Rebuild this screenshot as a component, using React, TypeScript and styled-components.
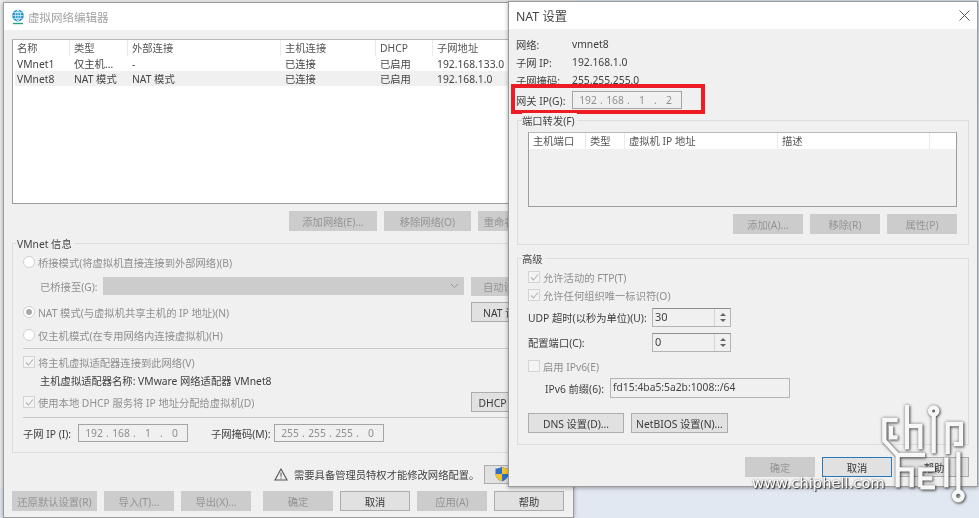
import React from "react";
import styled, { createGlobalStyle } from "styled-components";

const GlobalStyle = createGlobalStyle`
  html, body {
    margin: 0;
    padding: 0;
    overflow: hidden;
    background: #dfe6f0;
  }
  * {
    box-sizing: border-box;
  }
`;

const Desktop = styled.div`
  position: relative;
  width: 979px;
  height: 518px;
  overflow: hidden;
  background: linear-gradient(180deg, #d6dfeb 0%, #e2e8f1 100%);
  font-family: "Noto Sans", "Noto Sans CJK SC", sans-serif;
  font-size: 10.3px;
  color: #333;
  filter: blur(0.35px);
`;

const BehindStrip = styled.div`
  position: absolute;
  left: 0;
  top: 0;
  width: 574px;
  height: 487px;
  background: #ececec;
`;

const Win = styled.div<{ $left: number; $top: number; $w: number; $h: number }>`
  position: absolute;
  left: ${(p) => p.$left}px;
  top: ${(p) => p.$top}px;
  width: ${(p) => p.$w}px;
  height: ${(p) => p.$h}px;
  background: #f0f0f0;
  border: 1px solid #9c9c9c;
  box-shadow: 0 1px 4px rgba(0, 0, 0, 0.35);
`;

const TitleBar = styled.div`
  display: flex;
  align-items: center;
  gap: 3px;
  height: 27px;
  padding: 0 6px 0 7px;
  background: #fff;
`;

const TitleText = styled.span<{ $dim?: boolean }>`
  font-size: ${(p) => (p.$dim ? 11.5 : 12.3)}px;
  color: ${(p) => (p.$dim ? "#a2a2a2" : "#444")};
`;

const CloseBox = styled.span`
  display: flex;
  margin-left: auto;
  margin-right: 1px;
`;

const LeftBody = styled.div`
  display: flex;
  flex-direction: column;
  padding: 9px 8px 0;
`;

const RightBody = styled.div`
  position: relative;
  display: flex;
  flex-direction: column;
  padding: 5px 8px 0 7px;
`;

const ListBox = styled.div<{ $h: number; $white?: boolean }>`
  height: ${(p) => p.$h}px;
  background: ${(p) => (p.$white ? "#fff" : "#f0f0f0")};
  border: 1px solid #9d9d9d;
  border-top-color: #b8b8b8;
`;

const ListRow = styled.div<{ $cols: string; $white?: boolean; $selected?: boolean }>`
  display: grid;
  grid-template-columns: ${(p) => p.$cols};
  align-items: center;
  height: 15px;
  background: ${(p) => (p.$selected ? "#f0f0f0" : p.$white ? "#fff" : "transparent")};
  margin-left: 2px;
`;

const HeadRow = styled(ListRow)`
  height: 16px;
  margin-left: 0;
  background: #fff;
`;

const HeadCell = styled.span`
  height: 100%;
  padding-left: 4px;
  line-height: 16px;
  white-space: nowrap;
  overflow: hidden;
  color: #555;
  border-right: 1px solid #eaeaea;
`;

const Cell = styled.span`
  padding-left: 2px;
  white-space: nowrap;
  overflow: hidden;
  color: #444;
`;

const ButtonRow = styled.div<{ $mt: number; $end?: boolean }>`
  display: flex;
  justify-content: ${(p) => (p.$end ? "flex-end" : "flex-start")};
  gap: 7px;
  margin-top: ${(p) => p.$mt}px;
`;

const Btn = styled.div<{ $w: number; $off?: boolean; $focus?: boolean; $ml?: number; $h?: number }>`
  display: flex;
  flex: none;
  align-items: center;
  justify-content: center;
  gap: 3px;
  width: ${(p) => p.$w}px;
  height: ${(p) => p.$h ?? 20}px;
  margin-left: ${(p) => p.$ml ?? 0}px;
  white-space: nowrap;
  overflow: hidden;
  background: ${(p) => (p.$off ? "#cccccc" : "#e1e1e1")};
  border: 1px solid ${(p) => (p.$focus ? "#2a78b5" : p.$off ? "#cccccc" : "#adadad")};
  color: ${(p) => (p.$off ? "#949494" : "#3a3a3a")};
`;

const Group = styled.div<{ $mt: number; $h: number; $pad: string; $ml?: number }>`
  position: relative;
  height: ${(p) => p.$h}px;
  margin-top: ${(p) => p.$mt}px;
  margin-left: ${(p) => p.$ml ?? 0}px;
  padding: ${(p) => p.$pad};
  border: 1px solid #dcdcdc;
`;

const Legend = styled.span`
  position: absolute;
  left: 4px;
  top: -8px;
  padding-right: 2px;
  line-height: 16px;
  background: #f0f0f0;
  color: #444;
`;

const FormRow = styled.div<{ $h?: number; $mt?: number; $indent?: number }>`
  display: flex;
  align-items: center;
  height: ${(p) => p.$h ?? 18}px;
  margin-top: ${(p) => p.$mt ?? 0}px;
  padding-left: ${(p) => p.$indent ?? 0}px;
  white-space: nowrap;
`;

const RadioMark = styled.span<{ $on?: boolean }>`
  display: flex;
  flex: none;
  align-items: center;
  justify-content: center;
  width: 12px;
  height: 12px;
  margin-right: 3px;
  background: #fff;
  border: 1px solid #d0d0d0;
  border-radius: 50%;

  &::after {
    content: "";
    display: ${(p) => (p.$on ? "block" : "none")};
    width: 6px;
    height: 6px;
    border-radius: 50%;
    background: #a8a8a8;
  }
`;

const CheckMark = styled.span`
  display: flex;
  flex: none;
  align-items: center;
  justify-content: center;
  width: 12px;
  height: 12px;
  margin-right: 3px;
  background: #f4f4f4;
  border: 1px solid #d4d4d4;
`;

const OffText = styled.span<{ $w?: number }>`
  flex: none;
  width: ${(p) => (p.$w ? `${p.$w}px` : "auto")};
  color: #8f8f8f;
`;

const DarkText = styled.span<{ $w?: number; $ml?: number }>`
  flex: none;
  width: ${(p) => (p.$w ? `${p.$w}px` : "auto")};
  margin-left: ${(p) => p.$ml ?? 0}px;
  color: #404040;
`;

const Combo = styled.div`
  display: flex;
  flex: none;
  align-items: center;
  justify-content: flex-end;
  width: 361px;
  height: 18px;
  padding-right: 5px;
  background: #cccccc;
`;

const Push = styled.span`
  flex: 1;
`;

const Rule = styled.div<{ $mt: number }>`
  height: 1px;
  margin-top: ${(p) => p.$mt}px;
  background: #c9c9c9;
`;

const IpBox = styled.div`
  display: flex;
  flex: none;
  align-items: center;
  width: 110px;
  height: 18px;
  padding-left: 5px;
  border: 1px solid #a4a4a4;
  color: #909090;
`;

const Octet = styled.span`
  width: 20px;
  text-align: center;
`;

const Dot = styled.span`
  width: 7px;
  text-align: center;
`;

const WarnRow = styled.div`
  display: flex;
  align-items: center;
  height: 20px;
  margin-top: 11px;
  padding-left: 262px;
  white-space: nowrap;
  color: #444;

  svg {
    flex: none;
  }
`;

const WarnText = styled.span`
  flex: none;
  width: 190px;
  margin-left: 6px;
`;

const InfoRow = styled.div<{ $h?: number; $mt?: number }>`
  display: grid;
  grid-template-columns: 56px auto;
  justify-content: start;
  align-items: center;
  height: ${(p) => p.$h ?? 18}px;
  margin-top: ${(p) => p.$mt ?? 0}px;
  white-space: nowrap;
  color: #404040;
`;

const RedFrame = styled.div`
  position: absolute;
  left: 2px;
  top: 55px;
  width: 194px;
  height: 30px;
  border: 4px solid #ed1c24;
`;

const Spin = styled.div`
  display: flex;
  flex: none;
  width: 79px;
  height: 19px;
  border: 1px solid #b4b4b4;
  border-top-color: #8e8e8e;
`;

const SpinValue = styled.span`
  flex: 1;
  padding-left: 2px;
  line-height: 15px;
  font-size: 11px;
  color: #444;
`;

const SpinArrows = styled.span`
  display: flex;
  flex-direction: column;
  align-items: center;
  justify-content: center;
  gap: 3px;
  width: 16px;
  border-left: 1px solid #d4d4d4;
`;

const ArrowUp = styled.span`
  border-left: 3px solid transparent;
  border-right: 3px solid transparent;
  border-bottom: 3px solid #666;
`;

const ArrowDown = styled.span`
  border-left: 3px solid transparent;
  border-right: 3px solid transparent;
  border-top: 3px solid #666;
`;

const PrefixBox = styled.div`
  flex: none;
  width: 180px;
  height: 20px;
  padding-left: 2px;
  line-height: 16px;
  border: 1px solid #b4b4b4;
  color: #444;
`;

const Watermark = styled.svg`
  position: absolute;
  left: 875px;
  top: 400px;
  width: 100px;
  height: 110px;
  overflow: visible;
  filter: drop-shadow(1px 1px 1px rgba(0, 0, 0, 0.5)) drop-shadow(0 0 1.5px rgba(0, 0, 0, 0.45));
`;

const WatermarkText = styled.span`
  position: absolute;
  left: 752px;
  top: 473px;
  font-family: "DejaVu Sans", sans-serif;
  font-size: 14.7px;
  line-height: 20px;
  color: #fff;
  text-shadow: 1px 1px 1px rgba(0, 0, 0, 0.75), 0 0 2px rgba(0, 0, 0, 0.6), 0 0 1px #fff;
`;

const netCols = "57px 58px 153px 95px 57px 1fr";
const portCols = "57px 39px 153px 152px 28px";

const Tick = () => (
  <svg width="9" height="9" viewBox="0 0 9 9">
    <path d="M1 4.5 L3.5 7 L8 1.5" fill="none" stroke="#b4b4b4" strokeWidth="1.1" />
  </svg>
);

const Chevron = () => (
  <svg width="9" height="6" viewBox="0 0 9 6">
    <path d="M1 1 L4.5 4.5 L8 1" fill="none" stroke="#999" strokeWidth="1" />
  </svg>
);

const GlobeIcon = () => (
  <svg width="14" height="16" viewBox="0 0 14 16">
    <circle cx="7" cy="6.6" r="5.8" fill="#1f93c9" />
    <path
      d="M1.5 6.6 H12.5 M7 1 V12 M2.6 3.6 H11.4 M2.6 9.6 H11.4 M7 1 C3.6 4 3.6 9 7 12 M7 1 C10.4 4 10.4 9 7 12"
      fill="none"
      stroke="#e6f5fb"
      strokeWidth="0.8"
    />
    <path d="M2 14.5 H12" stroke="#2aa37c" strokeWidth="1.4" />
  </svg>
);

const WarnIcon = () => (
  <svg width="14" height="13" viewBox="0 0 14 13">
    <path d="M7 1 L13 12 H1 Z" fill="none" stroke="#555" strokeWidth="1.1" />
    <path d="M7 4.5 V8.6 M7 9.6 V10.8" stroke="#555" strokeWidth="1" />
  </svg>
);

const ShieldIcon = () => (
  <svg width="14" height="16" viewBox="0 0 14 16">
    <path d="M7 0.5 C9 2 11 2.5 13.5 2.5 V8 C13.5 11.5 10.5 14.2 7 15.5 C3.5 14.2 0.5 11.5 0.5 8 V2.5 C3 2.5 5 2 7 0.5 Z" fill="#2f6fc4" />
    <path d="M7 0.5 C9 2 11 2.5 13.5 2.5 V8 H7 Z" fill="#f4c430" />
    <path d="M7 8 H0.5 C0.5 11.5 3.5 14.2 7 15.5 Z" fill="#f4c430" />
  </svg>
);

const CloseIcon = () => (
  <svg width="11" height="11" viewBox="0 0 11 11">
    <path d="M0.5 0.5 L10.5 10.5 M10.5 0.5 L0.5 10.5" stroke="#555" strokeWidth="1" />
  </svg>
);

const Ip = ({ parts }: { parts: string[] }) => (
  <IpBox>
    <Octet>{parts[0]}</Octet>
    <Dot>.</Dot>
    <Octet>{parts[1]}</Octet>
    <Dot>.</Dot>
    <Octet>{parts[2]}</Octet>
    <Dot>.</Dot>
    <Octet>{parts[3]}</Octet>
  </IpBox>
);

const SpinBox = ({ value }: { value: string }) => (
  <Spin>
    <SpinValue>{value}</SpinValue>
    <SpinArrows>
      <ArrowUp />
      <ArrowDown />
    </SpinArrows>
  </Spin>
);

// logo strokes traced from the reference, 3 units per pixel
const Logo = () => (
  <Watermark viewBox="0 0 300 330">
    <g fill="none" stroke="#f7f7f7" strokeWidth="13">
      <path d="M68 60 H28 V122 L68 165 H150" />
      <path d="M48 78 V112 H68" />
      <path d="M96 15 V148" />
      <path d="M96 78 H136 V148" />
      <circle cx="176" cy="33" r="11" />
      <path d="M176 45 V160" />
      <path d="M218 162 V72 H258 V132 H236" />
      <path d="M68 165 V262" />
      <path d="M68 208 H110 V262" />
      <path d="M136 262 V208 H180 M136 235 H172 M136 262 H180" />
      <path d="M214 172 V262" />
      <path d="M250 155 V275" />
      <circle cx="250" cy="288" r="13" />
    </g>
  </Watermark>
);

export default function App() {
  return (
    <Desktop>
      <GlobalStyle />
      <BehindStrip />

      <Win $left={3} $top={2} $w={571} $h={516}>
        <TitleBar>
          <GlobeIcon />
          <TitleText $dim>虚拟网络编辑器</TitleText>
        </TitleBar>
        <LeftBody>
          <ListBox $h={165} $white>
            <HeadRow $cols={netCols}>
              <HeadCell>名称</HeadCell>
              <HeadCell>类型</HeadCell>
              <HeadCell>外部连接</HeadCell>
              <HeadCell>主机连接</HeadCell>
              <HeadCell>DHCP</HeadCell>
              <HeadCell>子网地址</HeadCell>
            </HeadRow>
            <ListRow $cols={netCols} $white>
              <Cell>VMnet1</Cell>
              <Cell>仅主机...</Cell>
              <Cell>-</Cell>
              <Cell>已连接</Cell>
              <Cell>已启用</Cell>
              <Cell>192.168.133.0</Cell>
            </ListRow>
            <ListRow $cols={netCols} $selected>
              <Cell>VMnet8</Cell>
              <Cell>NAT 模式</Cell>
              <Cell>NAT 模式</Cell>
              <Cell>已连接</Cell>
              <Cell>已启用</Cell>
              <Cell>192.168.1.0</Cell>
            </ListRow>
          </ListBox>

          <ButtonRow $mt={7} $end>
            <Btn $w={88} $off>添加网络(E)...</Btn>
            <Btn $w={87} $off>移除网络(O)</Btn>
            <Btn $w={87} $off>重命名网络(W)...</Btn>
          </ButtonRow>

          <Group $mt={12} $h={210} $pad="9px 6px 0 10px">
            <Legend>VMnet 信息</Legend>
            <FormRow>
              <RadioMark />
              <OffText>桥接模式(将虚拟机直接连接到外部网络)(B)</OffText>
            </FormRow>
            <FormRow $mt={6} $indent={17}>
              <OffText $w={63}>已桥接至(G):</OffText>
              <Combo>
                <Chevron />
              </Combo>
              <Push />
              <Btn $w={87} $off $h={19}>自动设置(U)...</Btn>
            </FormRow>
            <FormRow $mt={8}>
              <RadioMark $on />
              <OffText>NAT 模式(与虚拟机共享主机的 IP 地址)(N)</OffText>
              <Push />
              <Btn $w={87}>NAT 设置(S)...</Btn>
            </FormRow>
            <FormRow $mt={5}>
              <RadioMark />
              <OffText>仅主机模式(在专用网络内连接虚拟机)(H)</OffText>
            </FormRow>
            <Rule $mt={4} />
            <FormRow $mt={4}>
              <CheckMark>
                <Tick />
              </CheckMark>
              <OffText>将主机虚拟适配器连接到此网络(V)</OffText>
            </FormRow>
            <FormRow $indent={17}>
              <DarkText>主机虚拟适配器名称: VMware 网络适配器 VMnet8</DarkText>
            </FormRow>
            <FormRow $mt={4}>
              <CheckMark>
                <Tick />
              </CheckMark>
              <OffText>使用本地 DHCP 服务将 IP 地址分配给虚拟机(D)</OffText>
              <Push />
              <Btn $w={87}>DHCP 设置(P)...</Btn>
            </FormRow>
            <Rule $mt={6} />
            <FormRow $mt={6}>
              <DarkText $w={55}>子网 IP (I):</DarkText>
              <Ip parts={["192", "168", "1", "0"]} />
              <DarkText $w={63} $ml={23}>子网掩码(M):</DarkText>
              <Ip parts={["255", "255", "255", "0"]} />
            </FormRow>
          </Group>

          <WarnRow>
            <WarnIcon />
            <WarnText>需要具备管理员特权才能修改网络配置。</WarnText>
            <Btn $w={80} $h={19}>
              <ShieldIcon />
              更改设置
            </Btn>
          </WarnRow>

          <ButtonRow $mt={7}>
            <Btn $w={85} $off>还原默认设置(R)</Btn>
            <Btn $w={70} $off>导入(T)...</Btn>
            <Btn $w={70} $off>导出(X)...</Btn>
            <Btn $w={70} $off $ml={5}>确定</Btn>
            <Btn $w={70}>取消</Btn>
            <Btn $w={70} $off>应用(A)</Btn>
            <Btn $w={70}>帮助</Btn>
          </ButtonRow>
        </LeftBody>
      </Win>

      <Win $left={508} $top={1} $w={470} $h={486}>
        <TitleBar>
          <TitleText>NAT 设置</TitleText>
          <CloseBox>
            <CloseIcon />
          </CloseBox>
        </TitleBar>
        <RightBody>
          <InfoRow $mt={1}>
            <span>网络:</span>
            <span>vmnet8</span>
          </InfoRow>
          <InfoRow>
            <span>子网 IP:</span>
            <span>192.168.1.0</span>
          </InfoRow>
          <InfoRow>
            <span>子网掩码:</span>
            <span>255.255.255.0</span>
          </InfoRow>
          <InfoRow $mt={2}>
            <span>网关 IP(G):</span>
            <Ip parts={["192", "168", "1", "2"]} />
          </InfoRow>
          <RedFrame />

          <Group $mt={11} $h={125} $pad="11px 11px 0 10px" $ml={1}>
            <Legend>端口转发(F)</Legend>
            <ListBox $h={75}>
              <HeadRow $cols={portCols}>
                <HeadCell>主机端口</HeadCell>
                <HeadCell>类型</HeadCell>
                <HeadCell>虚拟机 IP 地址</HeadCell>
                <HeadCell>描述</HeadCell>
                <HeadCell />
              </HeadRow>
            </ListBox>
            <ButtonRow $mt={7} $end>
              <Btn $w={70} $off>添加(A)...</Btn>
              <Btn $w={70} $off>移除(R)</Btn>
              <Btn $w={70} $off>属性(P)</Btn>
            </ButtonRow>
          </Group>

          <Group $mt={13} $h={187} $pad="9px 11px 0 10px" $ml={1}>
            <Legend>高级</Legend>
            <FormRow>
              <CheckMark>
                <Tick />
              </CheckMark>
              <OffText>允许活动的 FTP(T)</OffText>
            </FormRow>
            <FormRow>
              <CheckMark>
                <Tick />
              </CheckMark>
              <OffText>允许任何组织唯一标识符(O)</OffText>
            </FormRow>
            <FormRow $h={19} $mt={4}>
              <DarkText $w={124}>UDP 超时(以秒为单位)(U):</DarkText>
              <SpinBox value="30" />
            </FormRow>
            <FormRow $h={19} $mt={6}>
              <DarkText $w={124}>配置端口(C):</DarkText>
              <SpinBox value="0" />
            </FormRow>
            <FormRow $mt={5}>
              <CheckMark />
              <OffText>启用 IPv6(E)</OffText>
            </FormRow>
            <FormRow $h={20} $mt={3} $indent={17}>
              <DarkText $w={65}>IPv6 前缀(6):</DarkText>
              <PrefixBox>fd15:4ba5:5a2b:1008::/64</PrefixBox>
            </FormRow>
            <ButtonRow $mt={15}>
              <Btn $w={96}>DNS 设置(D)...</Btn>
              <Btn $w={97}>NetBIOS 设置(N)...</Btn>
            </ButtonRow>
          </Group>

          <ButtonRow $mt={12} $end>
            <Btn $w={70} $off>确定</Btn>
            <Btn $w={70} $focus>取消</Btn>
            <Btn $w={70}>帮助</Btn>
          </ButtonRow>
        </RightBody>
      </Win>

      <Logo />
      <WatermarkText>www.chiphell.com</WatermarkText>
    </Desktop>
  );
}
